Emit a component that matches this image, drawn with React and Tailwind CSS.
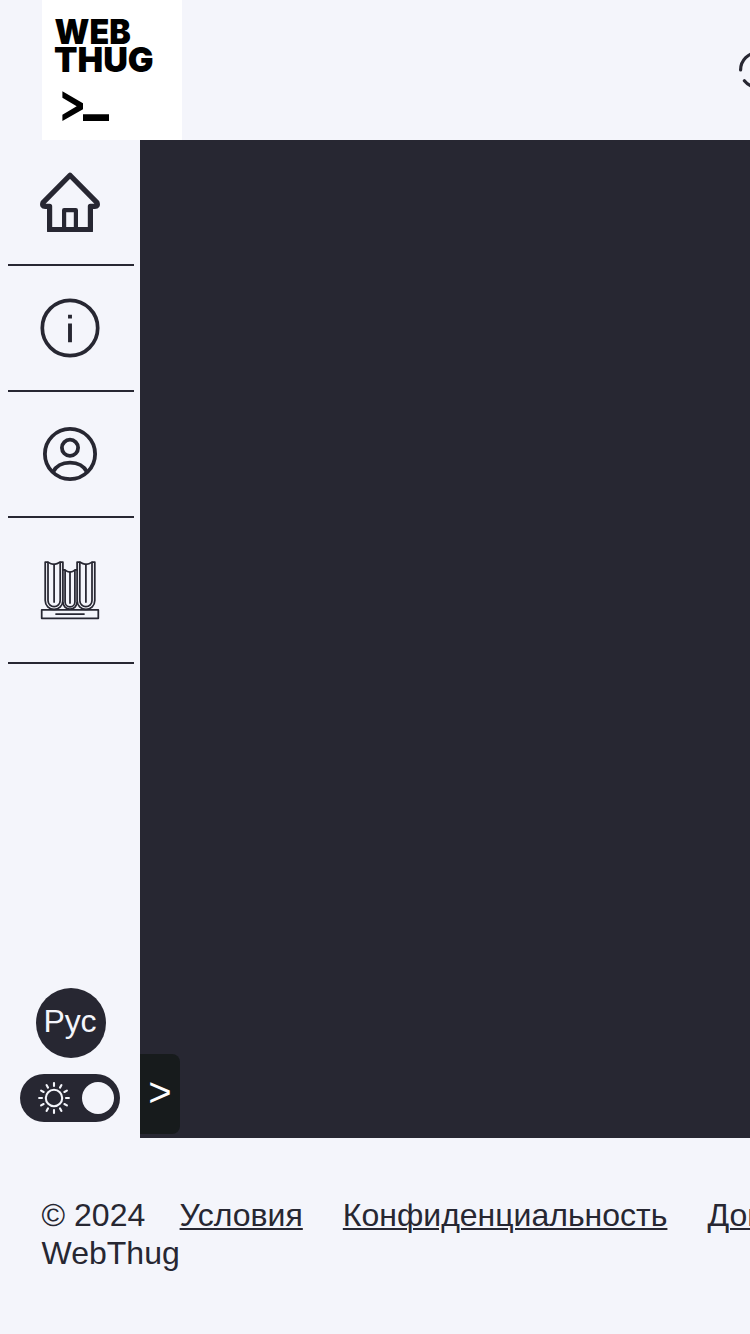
const HomeIcon = () => (
  <svg className="size-[60px]" viewBox="0 0 60 60" fill="none" stroke="#272732">
    <path d="M30 3.2 L57 30.6 Q58.4 34.6 54.5 34.4 H50.4 V57.6 H9.6 V34.4 H5.5 Q1.6 34.6 3 30.6 Z" strokeWidth="5.2" strokeLinejoin="round" />
    <path d="M7.1 50 V60 H52.9 V50 H48 V55 H12 V50 Z" fill="#272732" stroke="none" />
    <path d="M24.1 57 V38.2 H35.9 V57" strokeWidth="4.2" strokeLinejoin="round" />
  </svg>
);

const InfoIcon = () => (
  <svg className="size-[60px]" viewBox="0 0 60 60" fill="none" stroke="#272732">
    <circle cx="30" cy="30" r="27.7" strokeWidth="3.7" />
    <path d="M30 16.8 V20.4 M30 25.4 V44.2" strokeWidth="3.9" />
  </svg>
);

const UserIcon = () => (
  <svg className="size-[60px]" viewBox="0 0 60 60" fill="none" stroke="#272732" strokeWidth="3.8">
    <circle cx="30" cy="30" r="25.1" />
    <circle cx="30" cy="23.8" r="8.1" />
    <path d="M12.9 48.2 C16 42.2 22.5 38.7 30 38.7 C37.5 38.7 44 42.2 47.1 48.2" />
  </svg>
);

const BooksIcon = () => (
  <svg className="size-[60px]" viewBox="0 0 60 60" fill="none" stroke="#272732" strokeWidth="1.75" strokeLinejoin="round" strokeLinecap="round">
    <path d="M1.7 49.9 H58.3 V58.3 H1.7 Z M16 54.1 H44" />
    <path d="M5.2 2.1 V40.6 A8.85 8.85 0 0 0 22.9 40.6 V2.1 H20.3 Q17 4.3 14.1 4.3 Q11 4.3 7.9 2.1 Z" />
    <path d="M8 2.4 V40.6 A6.1 6.1 0 0 0 20.2 40.6 V2.4 M14.1 4.3 V42" />
    <path d="M37.1 2.1 V40.6 A8.85 8.85 0 0 0 54.8 40.6 V2.1 H52.1 Q49 4.3 45.9 4.3 Q43 4.3 39.7 2.1 Z" />
    <path d="M39.8 2.4 V40.6 A6.1 6.1 0 0 0 52 40.6 V2.4 M45.9 4.3 V42" />
    <path d="M23.1 9.9 H24.8 Q27.4 12 30 12 Q32.6 12 35.2 9.9 H36.9 M22.9 42 A7.1 7.1 0 0 0 37.1 42" />
    <path d="M25.1 10.3 V41.9 A4.9 4.9 0 0 0 34.9 41.9 V10.3 M30 12 V43" />
  </svg>
);

const SunIcon = () => (
  <svg className="size-8" viewBox="-16 -16 32 32" fill="none" stroke="#f4f5fb" strokeWidth="2.1" strokeLinecap="round">
    <circle r="8.2" />
    {[0, 30, 60, 90, 120, 150, 180, 210, 240, 270, 300, 330].map((a) => (
      <path key={a} d="M12 0 H14.9" transform={`rotate(${a})`} />
    ))}
  </svg>
);

const Logo = () => (
  <svg className="size-[140px] shrink-0 bg-white" viewBox="0 0 140 140">
    <g fontFamily="Inter, 'Open Sans', sans-serif" fontWeight="900" fontSize="34.4" fill="#000">
      <text x="12.6" y="44" textLength="76.2" lengthAdjust="spacingAndGlyphs">WEB</text>
      <text x="12" y="72" textLength="99.7" lengthAdjust="spacingAndGlyphs">THUG</text>
    </g>
    <path d="M20.4 91.3 L41 103.2 V109.2 L20.4 121 V114.7 L34.7 106.2 L20.4 97.7 Z M41 114.3 H67 V121 H41 Z" />
  </svg>
);

const RefreshIcon = () => (
  <svg className="size-10 shrink-0" viewBox="0 0 40 40" fill="none" stroke="#272732" strokeWidth="3.2" strokeLinecap="round">
    <path d="M2.6 20 A17.4 17.4 0 0 1 37.4 20 M6.4 30.7 A17.4 17.4 0 0 0 33.6 30.7" />
  </svg>
);

const NavItem = ({ children, tall }) => (
  <a className={`flex w-[126px] items-center border-b-2 border-[#272732] pl-8 ${tall ? "h-[146px]" : "h-[126px]"}`}>
    {children}
  </a>
);

const FooterLink = ({ children }) => (
  <a className="shrink-0 underline decoration-2 underline-offset-2">{children}</a>
);

export default function App() {
  return (
    <div className="flex h-[1334px] w-[750px] flex-col overflow-hidden bg-[#f4f5fb] font-['Liberation_Sans',Arial,sans-serif] text-[#272732]">
      <header className="flex h-[140px] shrink-0 items-center gap-[556px] pl-[42px]">
        <Logo />
        <RefreshIcon />
      </header>

      <div className="flex h-[998px] shrink-0">
        <aside className="flex w-[140px] shrink-0 flex-col justify-between pb-4">
          <nav className="flex flex-col pl-2">
            <NavItem><HomeIcon /></NavItem>
            <NavItem><InfoIcon /></NavItem>
            <NavItem><UserIcon /></NavItem>
            <NavItem tall><BooksIcon /></NavItem>
          </nav>
          <div className="flex flex-col gap-4 pl-5">
            <button className="ml-4 flex size-[70px] items-center justify-center rounded-full bg-[#272732] pr-0.5 pb-1 text-[32px] leading-9 text-[#f4f5fb]">
              Рус
            </button>
            <button className="flex h-12 w-[100px] items-center justify-between rounded-full bg-[#272732] pr-1.5 pl-[18px]">
              <SunIcon />
              <span className="size-8 rounded-full bg-[#f4f5fb]" />
            </button>
          </div>
        </aside>
        <main className="flex flex-1 items-end bg-[#272732] pb-1">
          <button className="flex h-20 w-10 items-center justify-center rounded-r-lg bg-[#171b1c] pb-1 text-[40px] leading-[46px] text-white">
            &gt;
          </button>
        </main>
      </div>

      <footer className="flex gap-10 pt-[58px] pl-[41.6px] text-[32px] leading-[38px]">
        <p className="-mr-10 w-[138px] shrink-0">© 2024 WebThug</p>
        <FooterLink>Условия</FooterLink>
        <FooterLink>Конфиденциальность</FooterLink>
        <FooterLink>Договор</FooterLink>
      </footer>
    </div>
  );
}
